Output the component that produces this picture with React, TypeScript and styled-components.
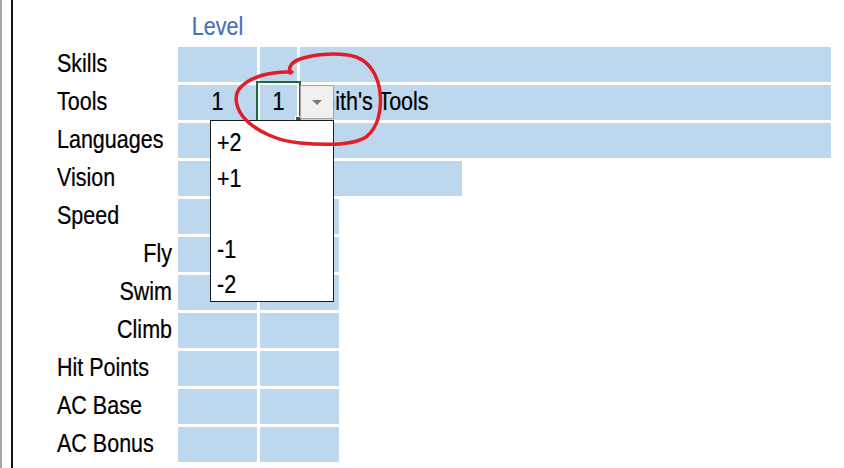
import React from "react";
import styled, { createGlobalStyle } from "styled-components";

const GlobalStyle = createGlobalStyle`
  html, body {
    margin: 0;
    padding: 0;
    background: #fff;
  }
  body {
    font-family: "Liberation Sans", Arial, sans-serif;
  }
`;

const Page = styled.div`
  position: relative;
  width: 844px;
  height: 468px;
  overflow: hidden;
  box-sizing: border-box;
  border-left: 2px solid #a6a6a6;
  background: #fff;
`;

const Sheet = styled.div`
  height: 100%;
  margin-left: 9px;
  padding-left: 41px;
  border-left: 2px solid #151515;
  box-sizing: border-box;
`;

const Grid = styled.div`
  display: grid;
  grid-template-columns: 121px 79px 37px 39px 120px 366px;
  grid-template-rows: 44px repeat(11, 35px);
  gap: 3px;
  font-size: 21.5px;
  color: #000;
  -webkit-text-stroke: 0.2px currentColor;
`;

// excel's zoomed text is taller than plain arial, stretch it a bit
const Stretch = styled.span`
  display: inline-block;
  transform: scaleY(1.18);
`;

const Heading = styled.div`
  grid-column: 2;
  display: flex;
  align-items: center;
  justify-content: center;
  padding-top: 10px;
  color: #4a70b8;
`;

const Label = styled.div<{ $right?: boolean }>`
  grid-column: 1;
  display: flex;
  align-items: center;
  justify-content: ${(p) => (p.$right ? "flex-end" : "flex-start")};
  padding: 0 3px;
  white-space: nowrap;
`;

const Cell = styled.div<{ $span: number; $left?: boolean }>`
  position: relative;
  grid-column: span ${(p) => p.$span};
  display: flex;
  align-items: center;
  justify-content: ${(p) => (p.$left ? "flex-start" : "center")};
  padding: 0 3px;
  background: #bdd7ee;
  white-space: nowrap;
`;

const Selection = styled.div`
  position: absolute;
  left: -4px;
  top: -4px;
  right: -4px;
  bottom: -2px;
  z-index: 1;
  border: 2px solid #1e6b41;
  pointer-events: none;
`;

const FillHandle = styled.div`
  position: absolute;
  right: -2px;
  bottom: -2px;
  width: 5px;
  height: 5px;
  background: #1e6b41;
  border: 1px solid #fff;
  border-right: none;
  border-bottom: none;
`;

const DropButton = styled.div`
  position: absolute;
  left: 0;
  top: 0;
  z-index: 2;
  width: 34px;
  height: 34px;
  box-sizing: border-box;
  display: flex;
  align-items: center;
  justify-content: center;
  background: #f0f0f0;
  border: 1px solid #a3a3a3;
`;

const Arrow = styled.span`
  width: 0;
  height: 0;
  border-left: 5px solid transparent;
  border-right: 5px solid transparent;
  border-top: 5px solid #7b7b7b;
`;

const DropList = styled.ul`
  position: absolute;
  left: -50px;
  top: 35px;
  z-index: 3;
  width: 124px;
  height: 182px;
  margin: 0;
  padding: 5px 0 0;
  list-style: none;
  box-sizing: border-box;
  overflow: hidden;
  background: #fff;
  border: 1px solid #1a1a1a;
`;

const Option = styled.li`
  height: 35.5px;
  display: flex;
  align-items: center;
  padding-left: 6px;
`;

const Annotation = styled.svg`
  position: absolute;
  left: -2px;
  top: 0;
  z-index: 5;
  pointer-events: none;
`;

const options = ["+2", "+1", "", "-1", "-2"];

type Row = { label: string; right?: boolean; spans: number[] };

const rows: Row[] = [
  { label: "Skills", spans: [1, 1, 3] },
  { label: "Tools", spans: [1, 1, 3] },
  { label: "Languages", spans: [1, 1, 3] },
  { label: "Vision", spans: [1, 3] },
  { label: "Speed", spans: [1, 2] },
  { label: "Fly", right: true, spans: [1, 2] },
  { label: "Swim", right: true, spans: [1, 2] },
  { label: "Climb", right: true, spans: [1, 2] },
  { label: "Hit Points", spans: [1, 2] },
  { label: "AC Base", spans: [1, 2] },
  { label: "AC Bonus", spans: [1, 2] },
];

const ToolsRow = () => (
  <>
    <Cell $span={1}>
      <Stretch>1</Stretch>
    </Cell>
    <Cell $span={1}>
      <Stretch>1</Stretch>
      <Selection>
        <FillHandle />
      </Selection>
      <DropList>
        {options.map((o, i) => (
          <Option key={i}>
            <Stretch>{o}</Stretch>
          </Option>
        ))}
      </DropList>
    </Cell>
    <Cell $span={3} $left>
      <Stretch>Smith's Tools</Stretch>
      <DropButton>
        <Arrow />
      </DropButton>
    </Cell>
  </>
);

const App = () => {
  return (
    <Page>
      <GlobalStyle />
      <Sheet>
        <Grid>
          <Heading>
            <Stretch>Level</Stretch>
          </Heading>
          {rows.map((row) => (
            <React.Fragment key={row.label}>
              <Label $right={row.right}>
                <Stretch>{row.label}</Stretch>
              </Label>
              {row.label === "Tools" ? (
                <ToolsRow />
              ) : (
                row.spans.map((s, i) => <Cell key={i} $span={s} />)
              )}
            </React.Fragment>
          ))}
        </Grid>
      </Sheet>
      <Annotation width="844" height="468" viewBox="0 0 844 468">
        <path
          d="M 290 73 C 288 67, 292 62, 300 59 C 315 54, 340 52, 356 57 C 370 62, 378 76, 380 92 C 382 110, 378 128, 366 137 C 352 146, 322 145, 300 143 C 278 141, 258 132, 246 120 C 236 110, 233 96, 240 88 C 250 77, 270 71, 292 72"
          fill="none"
          stroke="#e01e28"
          strokeWidth="3.5"
          strokeLinecap="round"
          strokeLinejoin="round"
        />
      </Annotation>
    </Page>
  );
};

export default App;
